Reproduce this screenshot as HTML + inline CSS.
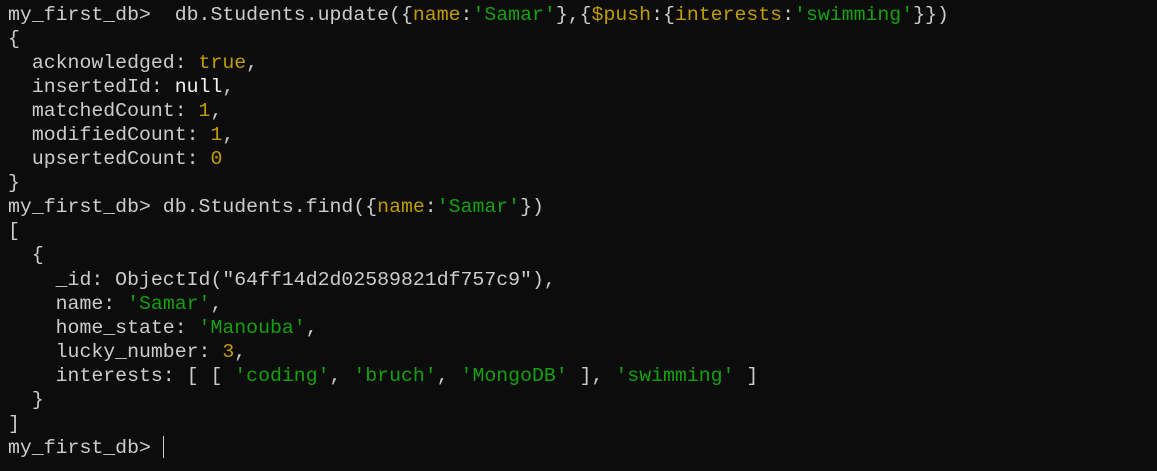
<!DOCTYPE html>
<html><head><meta charset="utf-8"><style>
html,body{margin:0;padding:0;background:#0c0c0c;width:1157px;height:471px;overflow:hidden}
pre{margin:0;padding:3px 0 0 8px;font-family:"Liberation Mono","DejaVu Sans Mono",monospace;font-size:19.85px;line-height:24.05px;color:#cccccc}
.y{color:#c19c00}.g{color:#13a10e}.w{color:#f2f2f2}
.cur{display:inline-block;width:1px;height:22px;background:#ccc;vertical-align:-5px}
</style></head><body><pre>my_first_db&gt;  db.Students.update({<span class="y">name</span>:<span class="g">'Samar'</span>},{<span class="y">$push</span>:{<span class="y">interests</span>:<span class="g">'swimming'</span>}})
{
  acknowledged: <span class="y">true</span>,
  insertedId: <span class="w">null</span>,
  matchedCount: <span class="y">1</span>,
  modifiedCount: <span class="y">1</span>,
  upsertedCount: <span class="y">0</span>
}
my_first_db&gt; db.Students.find({<span class="y">name</span>:<span class="g">'Samar'</span>})
[
  {
    _id: ObjectId("64ff14d2d02589821df757c9"),
    name: <span class="g">'Samar'</span>,
    home_state: <span class="g">'Manouba'</span>,
    lucky_number: <span class="y">3</span>,
    interests: [ [ <span class="g">'coding'</span>, <span class="g">'bruch'</span>, <span class="g">'MongoDB'</span> ], <span class="g">'swimming'</span> ]
  }
]
my_first_db&gt; <span class="cur"></span></pre></body></html>
